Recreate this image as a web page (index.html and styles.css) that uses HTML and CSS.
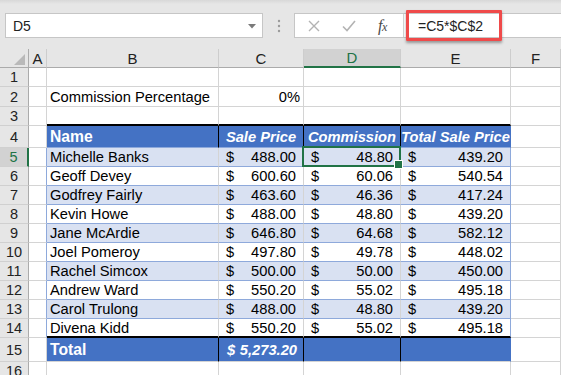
FILE: index.html
```html
<!DOCTYPE html>
<html>
<head>
<meta charset="utf-8">
<link rel="stylesheet" href="styles.css">
</head>
<body>
<div class="toolbar">
  <div class="namebox">
    <span class="nb-text">D5</span>
    <svg class="caret" width="8" height="5" viewBox="0 0 8 5"><path d="M0 0 H8 L4 4.5 Z" fill="#7a7a7a"/></svg>
  </div>
  <svg class="grip" width="4" height="14" viewBox="0 0 4 14"><circle cx="2" cy="2" r="1.2" fill="#9a9a9a"/><circle cx="2" cy="7" r="1.2" fill="#9a9a9a"/><circle cx="2" cy="12" r="1.2" fill="#9a9a9a"/></svg>
  <div class="fbar">
    <div class="fbtns">
      <svg class="ico-x" width="12" height="12" viewBox="0 0 12 12"><path d="M1 1 L11 11 M11 1 L1 11" stroke="#b3b3b3" stroke-width="1.4" fill="none"/></svg>
      <svg class="ico-ok" width="14" height="12" viewBox="0 0 14 12"><path d="M1 6.5 L5 10.5 L13 1" stroke="#b3b3b3" stroke-width="1.6" fill="none"/></svg>
      <span class="fx">f<span class="fxx">x</span></span>
    </div>
    <div class="finput">
      <span class="formula">=C5*$C$2</span>
    </div>
    <div class="hl"></div>
  </div>
</div>

<div class="sheet">
  <div class="c corner"><svg width="11" height="11" viewBox="0 0 11 11"><path d="M11 0 V11 H0 Z" fill="#b9b9b9"/></svg></div>
  <div class="c ch">A</div>
  <div class="c ch">B</div>
  <div class="c ch">C</div>
  <div class="c ch sel">D</div>
  <div class="c ch">E</div>
  <div class="c ch">F</div>

  <div class="c rh">1</div>
  <div class="c"></div><div class="c"></div><div class="c"></div><div class="c"></div><div class="c"></div><div class="c"></div>

  <div class="c rh">2</div>
  <div class="c"></div>
  <div class="c">Commission Percentage</div>
  <div class="c right">0%</div>
  <div class="c"></div><div class="c"></div><div class="c"></div>

  <div class="c rh">3</div>
  <div class="c"></div>
  <div class="c top"></div><div class="c top"></div><div class="c top"></div><div class="c top"></div>
  <div class="c"></div>

  <div class="c rh">4</div>
  <div class="c"></div>
  <div class="c th name">Name</div>
  <div class="c th"><i>Sale Price</i></div>
  <div class="c th"><i>Commission</i></div>
  <div class="c th last"><i>Total Sale Price</i></div>
  <div class="c"></div>

  <div class="c rh sel">5</div>
  <div class="c edge"></div>
  <div class="c td band">Michelle Banks</div>
  <div class="c td band num"><span>$</span><span>488.00</span></div>
  <div class="c td band num active"><span>$</span><span>48.80</span></div>
  <div class="c td band num last"><span>$</span><span>439.20</span></div>
  <div class="c"></div>

  <div class="c rh">6</div>
  <div class="c edge"></div>
  <div class="c td">Geoff Devey</div>
  <div class="c td num"><span>$</span><span>600.60</span></div>
  <div class="c td num"><span>$</span><span>60.06</span></div>
  <div class="c td num last"><span>$</span><span>540.54</span></div>
  <div class="c"></div>

  <div class="c rh">7</div>
  <div class="c edge"></div>
  <div class="c td band">Godfrey Fairly</div>
  <div class="c td band num"><span>$</span><span>463.60</span></div>
  <div class="c td band num"><span>$</span><span>46.36</span></div>
  <div class="c td band num last"><span>$</span><span>417.24</span></div>
  <div class="c"></div>

  <div class="c rh">8</div>
  <div class="c edge"></div>
  <div class="c td">Kevin Howe</div>
  <div class="c td num"><span>$</span><span>488.00</span></div>
  <div class="c td num"><span>$</span><span>48.80</span></div>
  <div class="c td num last"><span>$</span><span>439.20</span></div>
  <div class="c"></div>

  <div class="c rh">9</div>
  <div class="c edge"></div>
  <div class="c td band">Jane McArdie</div>
  <div class="c td band num"><span>$</span><span>646.80</span></div>
  <div class="c td band num"><span>$</span><span>64.68</span></div>
  <div class="c td band num last"><span>$</span><span>582.12</span></div>
  <div class="c"></div>

  <div class="c rh">10</div>
  <div class="c edge"></div>
  <div class="c td">Joel Pomeroy</div>
  <div class="c td num"><span>$</span><span>497.80</span></div>
  <div class="c td num"><span>$</span><span>49.78</span></div>
  <div class="c td num last"><span>$</span><span>448.02</span></div>
  <div class="c"></div>

  <div class="c rh">11</div>
  <div class="c edge"></div>
  <div class="c td band">Rachel Simcox</div>
  <div class="c td band num"><span>$</span><span>500.00</span></div>
  <div class="c td band num"><span>$</span><span>50.00</span></div>
  <div class="c td band num last"><span>$</span><span>450.00</span></div>
  <div class="c"></div>

  <div class="c rh">12</div>
  <div class="c edge"></div>
  <div class="c td">Andrew Ward</div>
  <div class="c td num"><span>$</span><span>550.20</span></div>
  <div class="c td num"><span>$</span><span>55.02</span></div>
  <div class="c td num last"><span>$</span><span>495.18</span></div>
  <div class="c"></div>

  <div class="c rh">13</div>
  <div class="c edge"></div>
  <div class="c td band">Carol Trulong</div>
  <div class="c td band num"><span>$</span><span>488.00</span></div>
  <div class="c td band num"><span>$</span><span>48.80</span></div>
  <div class="c td band num last"><span>$</span><span>439.20</span></div>
  <div class="c"></div>

  <div class="c rh">14</div>
  <div class="c edge"></div>
  <div class="c td top">Divena Kidd</div>
  <div class="c td num top"><span>$</span><span>550.20</span></div>
  <div class="c td num top"><span>$</span><span>55.02</span></div>
  <div class="c td num last top"><span>$</span><span>495.18</span></div>
  <div class="c"></div>

  <div class="c rh">15</div>
  <div class="c"></div>
  <div class="c tt name">Total</div>
  <div class="c tt num"><i>$</i><i>5,273.20</i></div>
  <div class="c tt"></div>
  <div class="c tt last"></div>
  <div class="c"></div>

  <div class="c rh">16</div>
  <div class="c"></div><div class="c"></div><div class="c"></div><div class="c"></div><div class="c"></div><div class="c"></div>
</div>
</body>
</html>
```

FILE: styles.css
```css
* { box-sizing: border-box; }

html, body {
  margin: 0;
  padding: 0;
  background: #ffffff;
  overflow: hidden;
}

body {
  width: 561px;
  height: 375px;
  font-family: "Liberation Sans", Arial, sans-serif;
  color: #000;
}

/* ---------- formula bar ---------- */
.toolbar {
  height: 49px;
  background: linear-gradient(#d8d8d8 0, #e6e6e6 4px, #e6e6e6 100%);
  display: flex;
  align-items: flex-start;
  padding-top: 13px;
  position: relative;
}

.namebox {
  margin-left: 5px;
  width: 258px;
  height: 25px;
  background: #fff;
  border: 1px solid #c6c6c6;
  display: flex;
  align-items: center;
  justify-content: space-between;
  padding: 0 6px 0 7px;
  font-size: 14px;
  color: #222;
}

.caret { margin-top: 1px; }

.grip {
  margin: 6px 0 0 14px;
}

.fbar {
  margin-left: 13px;
  flex: 1;
  height: 25px;
  background: #fff;
  border: 1px solid #c6c6c6;
  border-right: none;
  display: flex;
  align-items: center;
  position: relative;
}

.fbtns {
  width: 109px;
  height: 100%;
  display: flex;
  align-items: center;
  border-right: 1px solid #d4d4d4;
}

.ico-x { margin-left: 13px; }
.ico-ok { margin-left: 22px; }

.fx {
  margin-left: 22px;
  font-family: "Liberation Serif", "Times New Roman", serif;
  font-style: italic;
  font-size: 16px;
  color: #4a4a4a;
  letter-spacing: -0.5px;
}

.fxx { font-size: 12px; }

.finput {
  flex: 1;
  height: 100%;
  display: flex;
  align-items: center;
  padding-left: 14px;
}

.formula {
  font-size: 14px;
  color: #222;
}

.hl {
  position: absolute;
  left: 111px;
  top: -4px;
  width: 96px;
  height: 31px;
  border: 3px solid #ef4a4a;
  border-radius: 1px;
  box-shadow: 0 2px 3px rgba(0, 0, 0, 0.35);
}

/* ---------- sheet grid ---------- */
.sheet {
  display: grid;
  grid-template-columns: 29px 18px 172px 85px 97px 110px 1fr;
  grid-template-rows: 19px 19px 20px 19px 22px repeat(10, 19px) 24px 19px;
  font-size: 14.7px;
}

.c {
  border-right: 1px solid #d4d4d4;
  border-bottom: 1px solid #d4d4d4;
  display: flex;
  align-items: center;
  padding: 0 3px;
  white-space: nowrap;
  overflow: hidden;
  min-width: 0;
}

.right { justify-content: flex-end; }

.corner {
  background: #e6e6e6;
  border-right-color: #ababab;
  border-bottom-color: #ababab;
  justify-content: flex-end;
  align-items: flex-end;
  padding: 0 3px 2px 0;
}

.ch {
  background: #e6e6e6;
  border-right-color: #cdcdcd;
  border-bottom-color: #ababab;
  justify-content: center;
  color: #222;
  font-size: 15px;
}

.ch.sel {
  background: #d2d2d2;
  color: #217346;
  border-bottom: 2px solid #217346;
}

.rh {
  background: #e6e6e6;
  border-right-color: #ababab;
  border-bottom-color: #d0d0d0;
  justify-content: center;
  color: #222;
  font-size: 14.5px;
  padding: 0;
}

.rh.sel {
  background: #d2d2d2;
  color: #217346;
  border-right: 2px solid #217346;
}

.top { border-bottom: 2px solid #000 !important; }

.th {
  background: #4472c4;
  color: #fff;
  font-weight: bold;
  justify-content: center;
  border-right-color: #000;
  border-bottom-color: #8ea9db;
}

.th.name { justify-content: flex-start; }
.th.last { border-right-color: #4472c4; }
.name { font-size: 15.7px; }

.td { border-bottom-color: #8ea9db; }
.band { background: #d9e1f2; }
.edge { border-right-color: #8ea9db; }
.td.last { border-right-color: #8ea9db; }

.num {
  justify-content: space-between;
  padding: 0 7px 0 7px;
}

.tt {
  background: #4472c4;
  color: #fff;
  font-weight: bold;
  border-right-color: #000;
}

.tt.num { padding: 0 6px 0 8px; }
.tt.last { border-right-color: #4472c4; }

.active {
  position: relative;
  overflow: visible;
  z-index: 2;
}

.active::after {
  content: "";
  position: absolute;
  left: -2px;
  top: -2px;
  right: -1px;
  bottom: -1px;
  border: 2px solid #217346;
}

.active::before {
  content: "";
  position: absolute;
  right: -3px;
  bottom: -3px;
  width: 7px;
  height: 7px;
  background: #217346;
  border: 1px solid #fff;
  z-index: 3;
}
```
